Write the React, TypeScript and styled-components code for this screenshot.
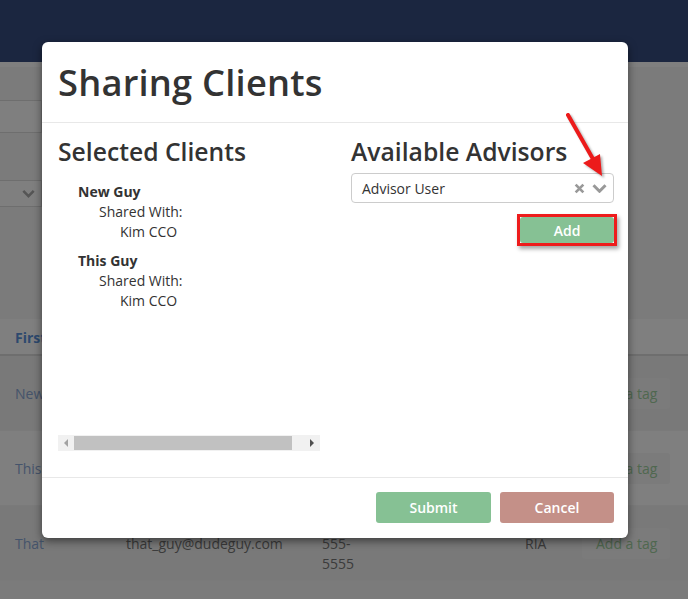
import React from "react";
import styled, { createGlobalStyle } from "styled-components";

// Global page reset
const GlobalStyle = createGlobalStyle`
  html, body {
    margin: 0;
    padding: 0;
  }
  body {
    font-family: "Open Sans", "Liberation Sans", sans-serif;
    background: #fff;
    color: #333;
  }
  * {
    box-sizing: border-box;
  }
`;

// Background page
const Page = styled.div`
  position: relative;
  width: 688px;
  height: 599px;
  overflow: hidden;
  background: #fff;
`;

const NavBar = styled.div`
  height: 67px;
  background: #364c80;
  border-bottom: 5px solid #fff;
`;

const Content = styled.div`
  background: #f6f6f6;
  height: 100%;
`;

const Filters = styled.div`
  display: flex;
  flex-direction: column;
  width: 42px;
  padding-top: 33px;
`;

const FilterInput = styled.div<{ $h: number; $mt?: number }>`
  height: ${(p) => p.$h}px;
  margin-top: ${(p) => p.$mt ?? 0}px;
  border: 1px solid #ddd;
  border-left: none;
  background: #fff;
  display: flex;
  align-items: center;
  justify-content: flex-end;
  padding-right: 6px;
`;

const Table = styled.div`
  margin-top: 112px;
  background: #fff;
`;

const Row = styled.div<{ $striped?: boolean; $header?: boolean }>`
  display: grid;
  grid-template-columns: 111px 196px 203px 57px 1fr;
  height: ${(p) => (p.$header ? 37 : 75)}px;
  padding-left: 15px;
  padding-top: ${(p) => (p.$header ? 9 : 28)}px;
  background: ${(p) => (p.$striped ? "#f2f2f2" : "#fff")};
  border-bottom: ${(p) => (p.$header ? "2px solid #ddd" : "1px solid #f4f4f4")};
  font-size: 14px;
  line-height: 20px;
`;

const HeadCell = styled.div`
  font-weight: 700;
  color: #5a92dc;
`;

const NameCell = styled.div`
  color: #8ba8d6;
`;

const Cell = styled.div`
  color: #777;
`;

const TagButton = styled.div`
  margin-top: -6px;
  width: 88px;
  height: 31px;
  padding-left: 14px;
  line-height: 31px;
  background: #f6f6f6;
  color: #9fd09f;
  border-radius: 3px;
`;

const Overlay = styled.div`
  position: absolute;
  inset: 0;
  background: rgba(0, 0, 0, 0.5);
`;

// Modal
const Modal = styled.div`
  position: absolute;
  top: 42px;
  left: 42px;
  width: 586px;
  height: 496px;
  background: #fff;
  border-radius: 6px;
  box-shadow: 0 3px 9px rgba(0, 0, 0, 0.5);
  display: flex;
  flex-direction: column;
`;

const ModalHeader = styled.div`
  height: 81px;
  padding: 0 16px;
  display: flex;
  align-items: center;
  border-bottom: 1px solid #e8e8e8;
`;

const Title = styled.h2`
  margin: 0;
  font-size: 36.3px;
  font-weight: 600;
  letter-spacing: 0.2px;
  color: #333;
`;

const ModalBody = styled.div`
  flex: 1;
  display: grid;
  grid-template-columns: 262px 263px;
  column-gap: 31px;
  padding: 15px 14px 0 16px;
`;

const LeftPane = styled.div`
  height: 313px;
  display: flex;
  flex-direction: column;
`;

const PaneInner = styled.div`
  flex: 1;
`;

const SectionTitle = styled.h3`
  margin: 0;
  font-size: 24.7px;
  line-height: 28px;
  font-weight: 600;
  color: #333;
  white-space: nowrap;
`;

const ClientList = styled.ul`
  list-style: none;
  margin: 16px 0 0;
  padding-left: 20px;
  font-size: 14px;
  line-height: 20px;
`;

const ClientItem = styled.li`
  margin-bottom: 9px;
`;

const ClientName = styled.div`
  font-weight: 700;
`;

const Indent = styled.div<{ $level: number }>`
  padding-left: ${(p) => p.$level * 21}px;
`;

// Horizontal scrollbar of the selected clients pane
const ScrollBar = styled.div`
  height: 16px;
  display: flex;
  background: #f1f1f1;
`;

const ScrollArrow = styled.div`
  width: 16px;
  display: flex;
  align-items: center;
  justify-content: center;
`;

const ScrollThumb = styled.div`
  width: 218px;
  margin: 1px 0;
  background: #c1c1c1;
`;

const ScrollTrack = styled.div`
  flex: 1;
`;

const SelectBox = styled.div`
  margin-top: 7px;
  height: 30px;
  border: 1px solid #ccc;
  border-radius: 4px;
  display: flex;
  align-items: center;
  padding: 0 6px 0 10px;
  font-size: 14px;
  color: #333;
`;

const SelectValue = styled.span`
  flex: 1;
`;

const SelectIcons = styled.span`
  display: flex;
  align-items: center;
  gap: 7px;
`;

const AddRow = styled.div`
  display: flex;
  justify-content: flex-end;
  margin-top: 11px;
  margin-right: -3px;
`;

const Highlight = styled.div`
  border: 3px solid #ee1c1c;
  box-shadow: 2px 3px 4px rgba(0, 0, 0, 0.35);
`;

const Button = styled.button<{ $variant: "ok" | "cancel"; $w: number; $h: number }>`
  width: ${(p) => p.$w}px;
  height: ${(p) => p.$h}px;
  border: none;
  border-radius: 3px;
  background: ${(p) => (p.$variant === "ok" ? "#86c194" : "#c49088")};
  color: #fff;
  font-family: inherit;
  font-size: 14px;
  font-weight: 600;
  cursor: pointer;
  display: block;
`;

const ModalFooter = styled.div`
  height: 61px;
  border-top: 1px solid #e8e8e8;
  padding: 14px 14px 0;
  display: flex;
  justify-content: flex-end;
  gap: 9px;
`;

const Arrow = styled.svg`
  position: absolute;
  left: 560px;
  top: 105px;
  overflow: visible;
  filter: drop-shadow(2px 2px 1px rgba(0, 0, 0, 0.3));
`;

const Chevron = ({ size = 14, color = "#999" }: { size?: number; color?: string }) => (
  <svg width={size} height={size * 0.7} viewBox="0 0 20 14">
    <path d="M2 3 L10 11 L18 3" fill="none" stroke={color} strokeWidth="4" />
  </svg>
);

const Cross = () => (
  <svg width="11" height="11" viewBox="0 0 10 10">
    <path d="M1.5 1.5 L8.5 8.5 M8.5 1.5 L1.5 8.5" stroke="#999" strokeWidth="2.4" />
  </svg>
);

const Triangle = ({ dir, color }: { dir: "left" | "right"; color: string }) => (
  <svg width="6" height="8" viewBox="0 0 6 8">
    <polygon points={dir === "left" ? "5,0 5,8 1,4" : "1,0 1,8 5,4"} fill={color} />
  </svg>
);

const clients = [
  { name: "New Guy", shared: ["Kim CCO"] },
  { name: "This Guy", shared: ["Kim CCO"] },
];

const rows = [
  { first: "New", email: "", phone: [""], type: "" },
  { first: "This", email: "", phone: [""], type: "" },
  { first: "That", email: "that_guy@dudeguy.com", phone: ["555-", "5555"], type: "RIA" },
];

export default function App() {
  return (
    <>
      <GlobalStyle />
      <Page>
        <NavBar />
        <Content>
          <Filters>
            <FilterInput $h={33} />
            <FilterInput $h={27} $mt={47}>
              <Chevron size={13} color="#aaa" />
            </FilterInput>
          </Filters>
          <Table>
            <Row $header>
              <HeadCell>First</HeadCell>
            </Row>
            {rows.map((r, i) => (
              <Row key={r.first} $striped={i % 2 === 0}>
                <NameCell>{r.first}</NameCell>
                <Cell>{r.email}</Cell>
                <Cell>
                  {r.phone.map((p) => (
                    <div key={p}>{p}</div>
                  ))}
                </Cell>
                <Cell>{r.type}</Cell>
                <div>
                  <TagButton>Add a tag</TagButton>
                </div>
              </Row>
            ))}
          </Table>
        </Content>
        <Overlay />

        <Modal>
          <ModalHeader>
            <Title>Sharing Clients</Title>
          </ModalHeader>
          <ModalBody>
            <LeftPane>
              <PaneInner>
                <SectionTitle>Selected Clients</SectionTitle>
                <ClientList>
                  {clients.map((c) => (
                    <ClientItem key={c.name}>
                      <ClientName>{c.name}</ClientName>
                      <Indent $level={1}>Shared With:</Indent>
                      {c.shared.map((s) => (
                        <Indent key={s} $level={2}>
                          {s}
                        </Indent>
                      ))}
                    </ClientItem>
                  ))}
                </ClientList>
              </PaneInner>
              <ScrollBar>
                <ScrollArrow>
                  <Triangle dir="left" color="#a3a3a3" />
                </ScrollArrow>
                <ScrollThumb />
                <ScrollTrack />
                <ScrollArrow>
                  <Triangle dir="right" color="#505050" />
                </ScrollArrow>
              </ScrollBar>
            </LeftPane>
            <div>
              <SectionTitle>Available Advisors</SectionTitle>
              <SelectBox>
                <SelectValue>Advisor User</SelectValue>
                <SelectIcons>
                  <Cross />
                  <Chevron size={15} />
                </SelectIcons>
              </SelectBox>
              <AddRow>
                <Highlight>
                  <Button $variant="ok" $w={94} $h={26}>
                    Add
                  </Button>
                </Highlight>
              </AddRow>
            </div>
          </ModalBody>
          <ModalFooter>
            <Button $variant="ok" $w={115} $h={31}>
              Submit
            </Button>
            <Button $variant="cancel" $w={114} $h={31}>
              Cancel
            </Button>
          </ModalFooter>
        </Modal>

        <Arrow width="60" height="80" viewBox="0 0 60 80">
          <line x1="8" y1="10" x2="33" y2="54" stroke="#ec1b1b" strokeWidth="4" strokeLinecap="round" />
          <polygon points="42,71 40,49 23,58" fill="#ec1b1b" />
        </Arrow>
      </Page>
    </>
  );
}
